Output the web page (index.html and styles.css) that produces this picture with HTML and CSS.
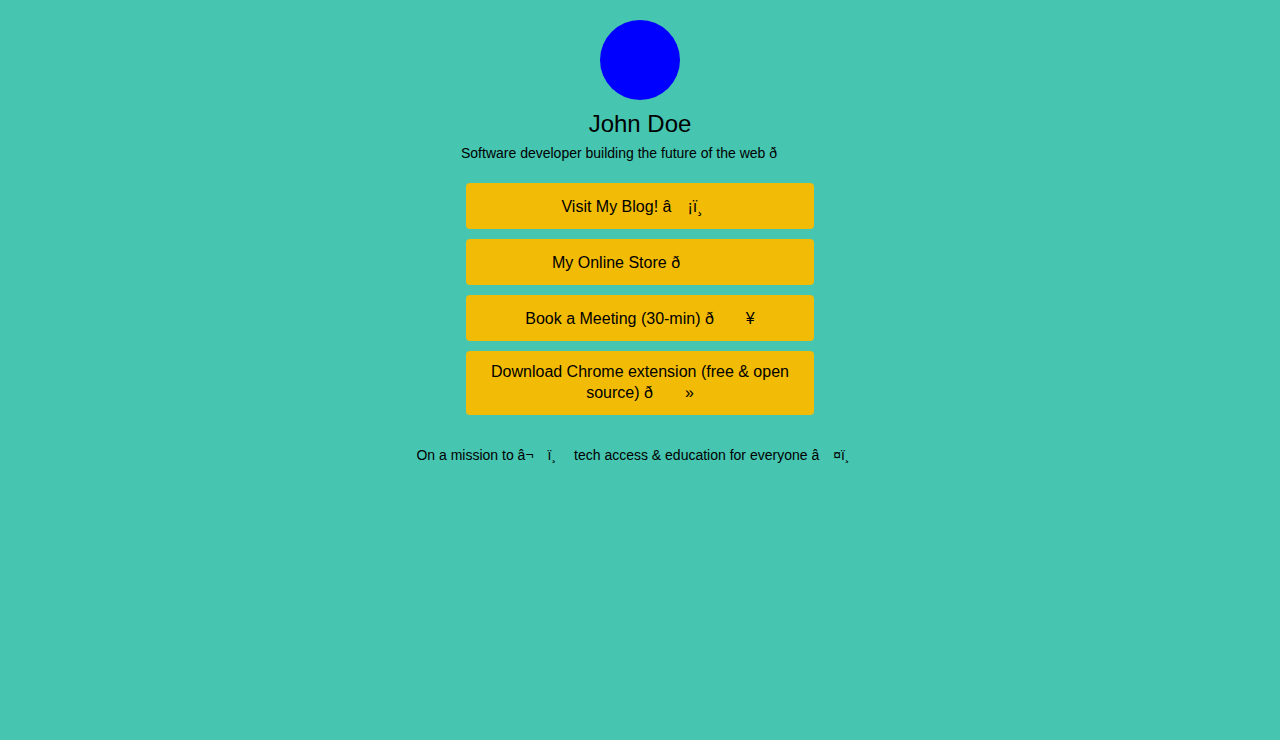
FILE: index.html
```html
<!DOCTYPE html>
<html lang="en">
<head>
<meta charset="utf-8">
<title>John Doe</title>
<link rel="stylesheet" href="styles.css">
</head>
<body>
<main class="page">
  <div class="avatar"></div>
  <h1 class="name">John Doe</h1>
  <p class="bio">Software developer building the future of the web ð<span class="c"></span><span class="c"></span><span class="c"></span></p>
  <nav class="links">
    <a class="link" href="#">Visit My Blog! â<span class="c"></span>¡ï¸<span class="c"></span></a>
    <a class="link" href="#">My Online Store ð<span class="c"></span><span class="c"></span><span class="c"></span></a>
    <a class="link" href="#">Book a Meeting (30-min) ð<span class="c"></span><span class="c"></span>¥</a>
    <a class="link" href="#">Download Chrome extension (free &amp; open source) ð<span class="c"></span><span class="c"></span>»</a>
  </nav>
  <p class="footer">On a mission to â¬<span class="c"></span>ï¸<span class="c"></span> tech access &amp; education for everyone â<span class="c"></span>¤ï¸<span class="c"></span></p>
</main>
</body>
</html>
```
FILE: styles.css
```css
html, body {
  margin: 0;
  padding: 0;
}

body {
  background: #46c5b0;
  color: #000;
  font-family: "Liberation Sans", Arial, Helvetica, sans-serif;
  min-height: 740px;
}

.page {
  display: flex;
  flex-direction: column;
  align-items: center;
  padding-top: 20px;
}

.avatar {
  width: 80px;
  height: 80px;
  border-radius: 50%;
  background: #0000ff;
}

.name {
  margin: 10px 0 0;
  font-size: 24px;
  font-weight: normal;
  line-height: normal;
}

.bio {
  margin: 7px 0 0;
  font-size: 14px;
  text-align: center;
}

.c {
  display: inline-block;
  width: 1em;
}

.links {
  display: flex;
  flex-direction: column;
  gap: 10px;
  margin-top: 22px;
  width: 348px;
}

.link {
  display: block;
  background: #f2bb05;
  color: #000;
  text-decoration: none;
  text-align: center;
  font-size: 16px;
  line-height: normal;
  padding: 12px 16px;
  border-radius: 4px;
}

.link .c {
  height: 22px;
  vertical-align: -5.5px;
}

.footer {
  margin: 32px 0 0;
  font-size: 14px;
  text-align: center;
}
```
